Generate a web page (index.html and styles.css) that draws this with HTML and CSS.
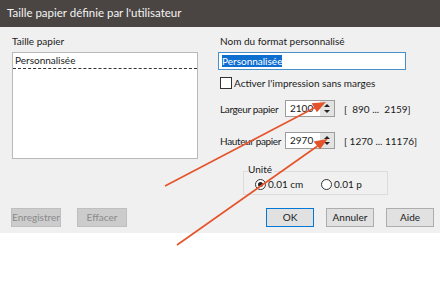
FILE: index.html
```html
<!DOCTYPE html>
<html lang="fr">
<head>
<meta charset="utf-8">
<link rel="stylesheet" href="styles.css">
</head>
<body>
<div class="titlebar">Taille papier définie par l'utilisateur</div>
<div class="dialog">
  <div class="cols">
    <div class="left">
      <div class="label">Taille papier</div>
      <div class="listbox">
        <div class="item">Personnalisée</div>
      </div>
    </div>
    <div class="right">
      <div class="label">Nom du format personnalisé</div>
      <div class="textbox"><span class="sel">Personnalisée</span></div>
      <div class="check-row"><span class="checkbox"></span><span>Activer l'impression sans marges</span></div>
      <div class="num-row">
        <span class="num-label">Largeur papier</span>
        <div class="numbox"><span class="val">2100</span><span class="spin"><span class="up"></span><span class="down"></span></span></div>
        <span class="range">[ &nbsp;890 ... &nbsp;2159]</span>
      </div>
      <div class="num-row">
        <span class="num-label">Hauteur papier</span>
        <div class="numbox"><span class="val">2970</span><span class="spin"><span class="up"></span><span class="down"></span></span></div>
        <span class="range">[ 1270 ... 11176]</span>
      </div>
      <div class="group">
        <div class="group-title">Unité</div>
        <div class="radios">
          <span class="radio-item"><span class="radio on"></span>0.01 cm</span>
          <span class="radio-item"><span class="radio"></span>0.01 p</span>
        </div>
      </div>
    </div>
  </div>
  <div class="buttons">
    <div class="btn-group">
      <span class="btn disabled">Enregistrer</span>
      <span class="btn disabled">Effacer</span>
    </div>
    <div class="btn-group">
      <span class="btn default">OK</span>
      <span class="btn">Annuler</span>
      <span class="btn">Aide</span>
    </div>
  </div>
</div>
<svg class="arrows" width="440" height="285" viewBox="0 0 440 285">
  <g stroke="#e5532a" stroke-width="1.6" fill="#e5532a">
    <line x1="165" y1="186" x2="316" y2="107"/>
    <polygon points="324,103 313,104 317,111"/>
    <line x1="177" y1="245" x2="319" y2="145"/>
    <polygon points="326,140 315,142 320,148"/>
  </g>
</svg>
</body>
</html>
```
FILE: styles.css
```css
html, body {
  margin: 0;
  padding: 0;
  background: #ffffff;
  width: 440px;
  height: 285px;
  overflow: hidden;
  font-family: Lato, "Noto Sans", sans-serif;
  font-size: 10px;
  color: #1a1a1a;
}
.titlebar {
  height: 27px;
  background: #4a4542;
  color: #f4f4f4;
  font-size: 11.5px;
  line-height: 26px;
  padding-left: 7px;
  box-sizing: border-box;
}
.dialog {
  background: #f0f0f0;
  height: 206px;
  box-sizing: border-box;
  padding-top: 7px;
  display: flex;
  flex-direction: column;
}
.cols {
  display: flex;
  height: 166px;
}
.left {
  width: 198px;
  padding-left: 12px;
  box-sizing: border-box;
  flex-shrink: 0;
}
.label {
  height: 14px;
  line-height: 14px;
  margin-bottom: 4px;
  white-space: nowrap;
}
.listbox {
  height: 107px;
  background: #fff;
  border: 1px solid #b9b9b9;
  box-sizing: border-box;
}
.item {
  padding: 1px 2px 0 2px;
  height: 14px;
  line-height: 13px;
  border-bottom: 1px dashed #333;
}
.right {
  margin-left: 22px;
  width: 210px;
  flex-shrink: 0;
}
.textbox {
  width: 188px;
  height: 18px;
  border: 1px solid #4a90c8;
  background: #fff;
  box-sizing: border-box;
  padding: 2px 3px;
  margin-left: -2px;
}
.sel {
  display: inline-block;
  background: #0f6fd1;
  color: #fff;
  line-height: 12px;
  height: 12px;
}
.check-row {
  display: flex;
  align-items: center;
  margin-top: 6px;
  height: 13px;
  white-space: nowrap;
}
.checkbox {
  border: 1px solid #333;
  background: #fff;
  margin-right: 2px;
  box-sizing: border-box;
  width: 12px;
  height: 12px;
  flex-shrink: 0;
}
.num-row {
  display: flex;
  align-items: center;
  height: 17px;
  margin-top: 11px;
  white-space: nowrap;
}
.num-row + .num-row {
  margin-top: 15px;
}
.num-label {
  width: 65px;
  flex-shrink: 0;
  letter-spacing: -0.35px;
}
.numbox {
  display: flex;
  width: 50px;
  height: 17px;
  border: 1px solid #9c9c9c;
  background: #fff;
  box-sizing: border-box;
  flex-shrink: 0;
}
.val {
  flex: 1;
  padding-left: 4px;
  line-height: 15px;
}
.spin {
  width: 14px;
  background: #e3e3e3;
  display: flex;
  flex-direction: column;
  align-items: center;
  justify-content: space-around;
  padding: 1px 0;
  box-sizing: border-box;
}
.up {
  width: 0; height: 0;
  border-left: 3px solid transparent;
  border-right: 3px solid transparent;
  border-bottom: 3px solid #222;
}
.down {
  width: 0; height: 0;
  border-left: 3px solid transparent;
  border-right: 3px solid transparent;
  border-top: 3px solid #222;
}
.range {
  margin-left: 9px;
}
.group {
  margin-top: 22px;
  margin-left: 23px;
  width: 145px;
  height: 24px;
  border: 1px solid #dcdcdc;
  box-sizing: border-box;
  position: relative;
}
.group-title {
  position: absolute;
  top: -9px;
  left: 4px;
  line-height: 12px;
  background: #f0f0f0;
  padding-right: 2px;
}
.radios {
  display: flex;
  padding-left: 11px;
  padding-top: 6px;
}
.radio-item {
  display: flex;
  align-items: center;
  line-height: 12px;
  width: 69px;
}
.radio {
  width: 11px;
  height: 11px;
  border: 1px solid #333;
  border-radius: 50%;
  background: #fff;
  box-sizing: border-box;
  margin-right: 2px;
  position: relative;
}
.radio.on::after {
  content: "";
  position: absolute;
  left: 2px; top: 2px;
  width: 5px; height: 5px;
  border-radius: 50%;
  background: #222;
}
.buttons {
  display: flex;
  justify-content: space-between;
  padding: 0 6px 0 11px;
  margin-top: 8px;
}
.btn-group {
  display: flex;
  gap: 12px;
}
.btn {
  display: inline-block;
  width: 48px;
  height: 19px;
  line-height: 17px;
  text-align: center;
  border: 1px solid #adadad;
  background: #e1e1e1;
  box-sizing: border-box;
}
.btn.disabled {
  width: 50px;
  background: #cccccc;
  border-color: #bfbfbf;
  color: #8a8a8a;
  margin-right: 4px;
}
.btn.default {
  border: 1px solid #0078d7;
}
.arrows {
  position: absolute;
  left: 0;
  top: 0;
  pointer-events: none;
}
```
